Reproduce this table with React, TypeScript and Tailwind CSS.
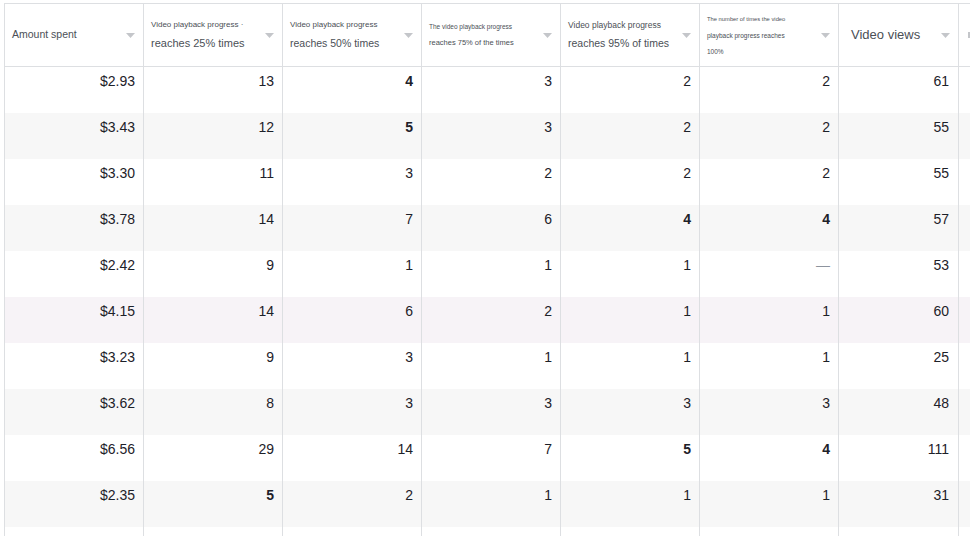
import React from "react";

type Row = { spent: string; v: (string | number)[]; bold?: number[]; tint?: "grey" | "pink" };

const rows: Row[] = [
  { spent: "$2.93", v: [13, 4, 3, 2, 2, 61], bold: [1] },
  { spent: "$3.43", v: [12, 5, 3, 2, 2, 55], bold: [1], tint: "grey" },
  { spent: "$3.30", v: [11, 3, 2, 2, 2, 55] },
  { spent: "$3.78", v: [14, 7, 6, 4, 4, 57], bold: [3, 4], tint: "grey" },
  { spent: "$2.42", v: [9, 1, 1, 1, "—", 53] },
  { spent: "$4.15", v: [14, 6, 2, 1, 1, 60], tint: "pink" },
  { spent: "$3.23", v: [9, 3, 1, 1, 1, 25] },
  { spent: "$3.62", v: [8, 3, 3, 3, 3, 48], tint: "grey" },
  { spent: "$6.56", v: [29, 14, 7, 5, 4, 111], bold: [3, 4] },
  { spent: "$2.35", v: [5, 2, 1, 1, 1, 31], bold: [0], tint: "grey" },
  { spent: "", v: ["", "", "", "", "", ""] },
];

const Caret = () => (
  <svg width="9" height="5" viewBox="0 0 9 5" className="shrink-0">
    <path d="M0 0h9L4.5 5z" fill="#c4c6ca" />
  </svg>
);

const HeadCell = ({ children, w = "w-[139px]" }: { children: React.ReactNode; w?: string }) => (
  <div className={`${w} shrink-0 h-full border-r border-[#dddfe2] flex items-center justify-between pl-[7px] pr-[8px]`}>
    <div className="flex flex-col text-[#4b4f56]">{children}</div>
    <Caret />
  </div>
);

export default function App() {
  return (
    <div className="w-[970px] h-[536px] overflow-hidden bg-white pt-[3px] pl-[4px]" style={{ fontFamily: '"Liberation Sans", Arial, sans-serif' }}>
      <div className="w-[1000px] border-l border-[#dddfe2]">
        {/* header */}
        <div className="flex h-[64px] border-t border-b border-[#dddfe2]">
          <HeadCell>
            <span className="text-[10.5px]">Amount spent</span>
          </HeadCell>
          <HeadCell>
            <span className="text-[8px] leading-[10px] mb-[7px]">Video playback progress ·</span>
            <span className="text-[11px] leading-[13px]">reaches 25% times</span>
          </HeadCell>
          <HeadCell>
            <span className="text-[8px] leading-[10px] mb-[7px]">Video playback progress</span>
            <span className="text-[10.5px] leading-[13px]">reaches 50% times</span>
          </HeadCell>
          <HeadCell>
            <span className="text-[6.5px] leading-[9px] mb-[7px]">The video playback progress</span>
            <span className="text-[7.5px] leading-[10px]">reaches 75% of the times</span>
          </HeadCell>
          <HeadCell>
            <span className="text-[8.5px] leading-[10px] mb-[7px]">Video playback progress</span>
            <span className="text-[10.5px] leading-[13px]">reaches 95% of times</span>
          </HeadCell>
          <HeadCell>
            <span className="text-[5.8px] leading-[8px] mb-[8px]">The number of times the video</span>
            <span className="text-[6.5px] leading-[9px] mb-[7px]">playback progress reaches</span>
            <span className="text-[6.5px] leading-[9px]">100%</span>
          </HeadCell>
          <HeadCell w="w-[120px]">
            <span className="text-[13px] pl-[5px]">Video views</span>
          </HeadCell>
          <div className="pl-[9px] flex items-center">
            <span className="w-[4px] h-[6px] bg-[#c4c6ca]" />
          </div>
        </div>

        {/* body */}
        {rows.map((r, i) => (
          <div
            key={i}
            className={`flex h-[46px] text-[14px] leading-[20px] text-[#1d2129] ${
              r.tint === "grey" ? "bg-[#f7f7f7]" : r.tint === "pink" ? "bg-[#f7f3f7]" : "bg-white"
            }`}
          >
            <div className="w-[139px] shrink-0 border-r border-[#dddfe2] text-right pr-[8px] pt-[4px]">{r.spent}</div>
            {r.v.map((x, j) => (
              <div
                key={j}
                className={`${j === 5 ? "w-[120px] pr-[9px]" : "w-[139px] pr-[8px]"} shrink-0 border-r border-[#dddfe2] text-right pt-[4px] ${
                  r.bold?.includes(j) ? "font-bold" : ""
                } ${x === "—" ? "text-[#8d949e]" : ""}`}
              >
                {x}
              </div>
            ))}
            <div className="flex-1" />
          </div>
        ))}
      </div>
    </div>
  );
}
